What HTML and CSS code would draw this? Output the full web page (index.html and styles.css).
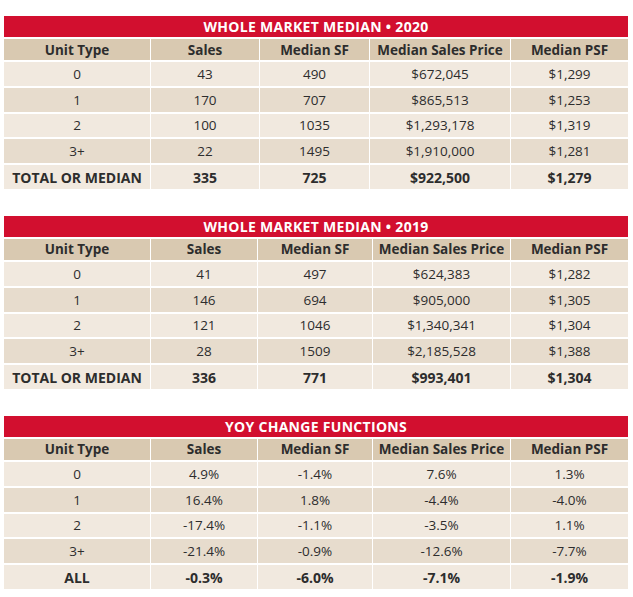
FILE: index.html
```html
<!DOCTYPE html>
<html>
<head>
<meta charset="utf-8">
<link rel="stylesheet" href="styles.css">
</head>
<body>
<div class="page">
  <div class="tbl tbl-a">
    <div class="title">WHOLE MARKET MEDIAN • 2020</div>
    <div class="hd">Unit Type</div><div class="hd">Sales</div><div class="hd">Median SF</div><div class="hd">Median Sales Price</div><div class="hd">Median PSF</div>
    <div class="c">0</div><div class="c">43</div><div class="c">490</div><div class="c">$672,045</div><div class="c">$1,299</div>
    <div class="c alt">1</div><div class="c alt">170</div><div class="c alt">707</div><div class="c alt">$865,513</div><div class="c alt">$1,253</div>
    <div class="c">2</div><div class="c">100</div><div class="c">1035</div><div class="c">$1,293,178</div><div class="c">$1,319</div>
    <div class="c alt">3+</div><div class="c alt">22</div><div class="c alt">1495</div><div class="c alt">$1,910,000</div><div class="c alt">$1,281</div>
    <div class="c tot">TOTAL OR MEDIAN</div><div class="c tot">335</div><div class="c tot">725</div><div class="c tot">$922,500</div><div class="c tot">$1,279</div>
  </div>
  <div class="tbl tbl-b">
    <div class="title">WHOLE MARKET MEDIAN • 2019</div>
    <div class="hd">Unit Type</div><div class="hd">Sales</div><div class="hd">Median SF</div><div class="hd">Median Sales Price</div><div class="hd">Median PSF</div>
    <div class="c">0</div><div class="c">41</div><div class="c">497</div><div class="c">$624,383</div><div class="c">$1,282</div>
    <div class="c alt">1</div><div class="c alt">146</div><div class="c alt">694</div><div class="c alt">$905,000</div><div class="c alt">$1,305</div>
    <div class="c">2</div><div class="c">121</div><div class="c">1046</div><div class="c">$1,340,341</div><div class="c">$1,304</div>
    <div class="c alt">3+</div><div class="c alt">28</div><div class="c alt">1509</div><div class="c alt">$2,185,528</div><div class="c alt">$1,388</div>
    <div class="c tot">TOTAL OR MEDIAN</div><div class="c tot">336</div><div class="c tot">771</div><div class="c tot">$993,401</div><div class="c tot">$1,304</div>
  </div>
  <div class="tbl tbl-b">
    <div class="title">YOY CHANGE FUNCTIONS</div>
    <div class="hd">Unit Type</div><div class="hd">Sales</div><div class="hd">Median SF</div><div class="hd">Median Sales Price</div><div class="hd">Median PSF</div>
    <div class="c">0</div><div class="c">4.9%</div><div class="c">-1.4%</div><div class="c">7.6%</div><div class="c">1.3%</div>
    <div class="c alt">1</div><div class="c alt">16.4%</div><div class="c alt">1.8%</div><div class="c alt">-4.4%</div><div class="c alt">-4.0%</div>
    <div class="c">2</div><div class="c">-17.4%</div><div class="c">-1.1%</div><div class="c">-3.5%</div><div class="c">1.1%</div>
    <div class="c alt">3+</div><div class="c alt">-21.4%</div><div class="c alt">-0.9%</div><div class="c alt">-12.6%</div><div class="c alt">-7.7%</div>
    <div class="c tot">ALL</div><div class="c tot">-0.3%</div><div class="c tot">-6.0%</div><div class="c tot">-7.1%</div><div class="c tot">-1.9%</div>
  </div>
</div>
</body>
</html>
```
FILE: styles.css
```css
html, body {
  margin: 0;
  padding: 0;
  background: #ffffff;
}
.page {
  padding: 16px 0 0 4px;
  display: flex;
  flex-direction: column;
  gap: 27px;
  font-family: "Open Sans", "Liberation Sans", sans-serif;
  color: #2d2d2d;
}
.tbl {
  display: grid;
  width: 624px;
  column-gap: 1px;
  row-gap: 2px;
  grid-template-rows: 21px 21px repeat(5, 23.8px);
}
.tbl-a {
  grid-template-columns: 146px 108px 109px 140px 117px;
}
.tbl-b {
  grid-template-columns: 146px 106px 114px 137px 117px;
  width: 623px;
}
.title {
  grid-column: 1 / -1;
  background: #d20f2f;
  color: #ffffff;
  font-weight: 700;
  font-size: 14px;
  letter-spacing: 0.3px;
  display: flex;
  align-items: center;
  justify-content: center;
}
.hd {
  background: #d9c9b1;
  font-weight: 700;
  font-size: 13.5px;
  display: flex;
  align-items: center;
  justify-content: center;
}
.c {
  background: #f1e9df;
  font-size: 13.5px;
  display: flex;
  align-items: center;
  justify-content: center;
}
.c.alt {
  background: #e7dccd;
}
.c.tot {
  font-weight: 700;
  font-size: 14px;
}
```
